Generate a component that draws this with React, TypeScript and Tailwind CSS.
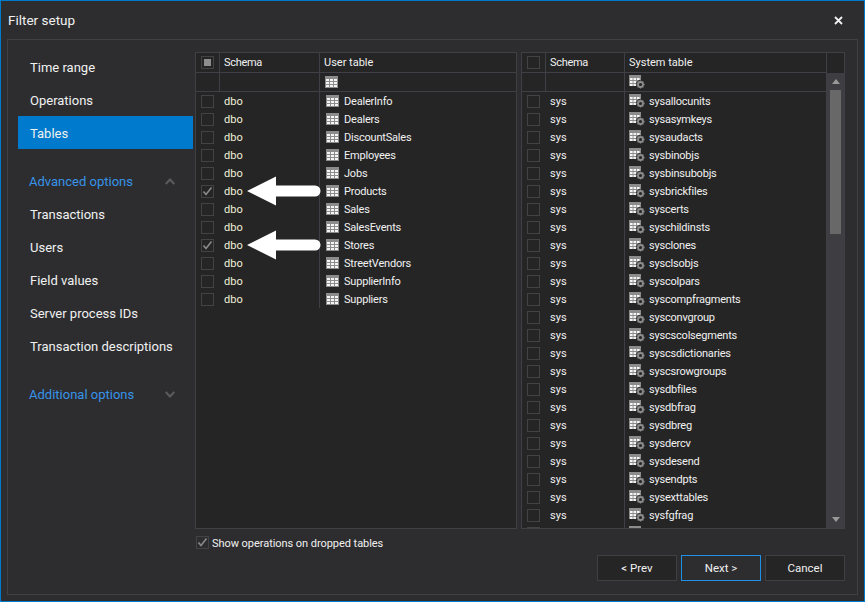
import { ReactNode } from "react";

const font = { fontFamily: 'Roboto, "Open Sans", sans-serif' };

const userTables: { name: string; checked?: boolean }[] = [
  { name: "DealerInfo" },
  { name: "Dealers" },
  { name: "DiscountSales" },
  { name: "Employees" },
  { name: "Jobs" },
  { name: "Products", checked: true },
  { name: "Sales" },
  { name: "SalesEvents" },
  { name: "Stores", checked: true },
  { name: "StreetVendors" },
  { name: "SupplierInfo" },
  { name: "Suppliers" },
];

const systemTables = [
  "sysallocunits",
  "sysasymkeys",
  "sysaudacts",
  "sysbinobjs",
  "sysbinsubobjs",
  "sysbrickfiles",
  "syscerts",
  "syschildinsts",
  "sysclones",
  "sysclsobjs",
  "syscolpars",
  "syscompfragments",
  "sysconvgroup",
  "syscscolsegments",
  "syscsdictionaries",
  "syscsrowgroups",
  "sysdbfiles",
  "sysdbfrag",
  "sysdbreg",
  "sysdercv",
  "sysdesend",
  "sysendpts",
  "sysexttables",
  "sysfgfrag",
];

const CheckBox = ({ checked, mixed }: { checked?: boolean; mixed?: boolean }) => (
  <span className="flex h-[13px] w-[13px] shrink-0 items-center justify-center border border-[#434346]">
    {checked && (
      <svg width="11" height="11" viewBox="0 0 11 11" fill="none">
        <path d="M1.5 5.5 L4 8.5 L9.5 1.5" stroke="#8a8a8a" strokeWidth="1.6" />
      </svg>
    )}
    {mixed && <span className="h-[7px] w-[7px] bg-[#8e8e8e]" />}
  </span>
);

const TableIcon = () => (
  <svg width="13" height="12" viewBox="0 0 13 12" className="shrink-0">
    <rect width="13" height="12" fill="#8c8c8c" />
    {[3, 6, 9].map((y) =>
      [1, 5, 9].map((x) => <rect key={`${x}-${y}`} x={x} y={y} width="3" height="2" fill="#f4f4f4" />)
    )}
  </svg>
);

const SystemTableIcon = () => (
  <svg width="16" height="14" viewBox="0 0 16 14" className="shrink-0">
    <rect width="12" height="11" fill="#8c8c8c" />
    {[3, 6, 9].map((y) =>
      [1, 4.5, 8].map((x) => <rect key={`${x}-${y}`} x={x} y={y} width="2.6" height="2" fill="#f4f4f4" />)
    )}
    <circle cx="11.5" cy="9.5" r="4.6" fill="#252526" />
    <circle cx="11.5" cy="9.5" r="2.5" fill="none" stroke="#8c8c8c" strokeWidth="1.8" />
    <path
      d="M11.5 5.4 V6.6 M11.5 12.4 V13.6 M7.4 9.5 H8.6 M14.4 9.5 H15.6 M8.6 6.6 L9.4 7.4 M13.6 11.6 L14.4 12.4 M14.4 6.6 L13.6 7.4 M9.4 11.6 L8.6 12.4"
      stroke="#8c8c8c"
      strokeWidth="1.3"
    />
  </svg>
);

const Chevron = ({ up }: { up?: boolean }) => (
  <svg width="10" height="7" viewBox="0 0 10 7" fill="none">
    <path d={up ? "M0.7 6 L5 1.5 L9.3 6" : "M0.7 1 L5 5.5 L9.3 1"} stroke="#5c5c60" strokeWidth="2" />
  </svg>
);

const Arrow = ({ className }: { className: string }) => (
  <svg width="74" height="30" viewBox="0 0 74 30" className={`absolute ${className}`}>
    <path d="M0 15 L29 0.5 V9.5 H68 A5.5 5.5 0 0 1 68 20.5 H29 V29.5 Z" fill="#fff" />
  </svg>
);

const NavItem = ({ children, active, low }: { children: ReactNode; active?: boolean; low?: boolean }) => (
  <div
    className={`flex h-[33px] items-center pl-[12px] text-[13px] text-[#f1f1f1] ${low ? "pt-[2px]" : ""} ${
      active ? "bg-[#007acc]" : ""
    }`}
  >
    {children}
  </div>
);

const NavGroup = ({ label, up, className }: { label: string; up?: boolean; className: string }) => (
  <div className={`flex h-[33px] items-center justify-between pl-[11px] pr-[18px] text-[13px] text-[#3794e8] ${className}`}>
    {label}
    <Chevron up={up} />
  </div>
);

const Button = ({ children, focused }: { children: ReactNode; focused?: boolean }) => (
  <button
    type="button"
    className={`flex h-[26px] w-[80px] items-center justify-center border pt-[2px] text-[11.5px] text-[#f1f1f1] ${
      focused ? "border-[#1e90e6] bg-[#2d2d30]" : "border-[#3f3f46] bg-[#252526]"
    }`}
  >
    {children}
  </button>
);

const App = () => {
  return (
    <div
      style={font}
      className="flex h-[602px] w-[865px] flex-col overflow-hidden border border-[#007acc] bg-[#2d2d30]"
    >
      <div className="flex h-[38px] shrink-0 items-center justify-between pl-[7px] pr-[21px] text-[13.5px] text-[#f1f1f1]">
        <span>Filter setup</span>
        <svg width="9" height="9" viewBox="0 0 9 9" fill="none">
          <path d="M1 1 L8 8 M8 1 L1 8" stroke="#f1f1f1" strokeWidth="1.8" />
        </svg>
      </div>

      <div className="mx-[6px] mb-[6px] flex min-h-0 flex-1 border border-[#3f3f46]">
        <div className="w-[185px] shrink-0 pl-[10px] pt-[10px]">
          <NavItem low>Time range</NavItem>
          <NavItem low>Operations</NavItem>
          <NavItem low active>
            Tables
          </NavItem>
          <NavGroup label="Advanced options" up className="mt-[16px]" />
          <NavItem>Transactions</NavItem>
          <NavItem>Users</NavItem>
          <NavItem>Field values</NavItem>
          <NavItem>Server process IDs</NavItem>
          <NavItem>Transaction descriptions</NavItem>
          <NavGroup label="Additional options" className="mt-[15px]" />
        </div>

        <div className="ml-[2px] flex min-w-0 flex-1 flex-col pt-[12px]">
          <div className="flex h-[477px] gap-[4px] text-[11px] text-[#f1f1f1]">
            {/* user tables */}
            <div className="relative flex w-[322px] flex-col border border-[#3f3f46] bg-[#252526]">
              <div className="flex h-[20px] shrink-0 border-b border-[#3f3f46]">
                <div className="flex w-[24px] items-center border-r border-[#3f3f46] pl-[5px]">
                  <CheckBox mixed />
                </div>
                <div className="flex w-[100px] items-center border-r border-[#3f3f46] pl-[4px] pt-[2px] tracking-[-0.3px]">
                  Schema
                </div>
                <div className="flex items-center pl-[4px] pt-[2px]">User table</div>
              </div>
              <div className="flex h-[19px] shrink-0 border-b border-[#3f3f46]">
                <div className="w-[24px] border-r border-[#3f3f46]" />
                <div className="w-[100px] border-r border-[#3f3f46]" />
                <div className="flex items-center pl-[5px]">
                  <TableIcon />
                </div>
              </div>
              {userTables.map((t) => (
                <div key={t.name} className="flex h-[18px] shrink-0">
                  <div className="flex w-[24px] items-center pl-[5px]">
                    <CheckBox checked={t.checked} />
                  </div>
                  <div className="flex w-[99px] items-center pl-[4px] pt-[2px] text-[#f0f0d8]">dbo</div>
                  <div className="flex items-center gap-[5px] border-l border-[#3f3f46] pl-[6px]">
                    <TableIcon />
                    <span className="pt-[2px] tracking-[-0.2px]">{t.name}</span>
                  </div>
                </div>
              ))}
              <Arrow className="left-[51px] top-[123px]" />
              <Arrow className="left-[51px] top-[177px]" />
            </div>

            {/* system tables */}
            <div className="flex w-[324px] border border-[#3f3f46] bg-[#252526]">
              <div className="flex min-w-0 flex-1 flex-col overflow-hidden">
                <div className="flex h-[20px] shrink-0 border-b border-[#3f3f46]">
                  <div className="flex w-[24px] items-center border-r border-[#3f3f46] pl-[5px]">
                    <CheckBox />
                  </div>
                  <div className="flex w-[79px] items-center border-r border-[#3f3f46] pl-[4px] pt-[2px] tracking-[-0.3px]">
                    Schema
                  </div>
                  <div className="flex items-center pl-[4px] pt-[2px]">System table</div>
                </div>
                <div className="flex h-[19px] shrink-0 border-b border-[#3f3f46]">
                  <div className="w-[24px] border-r border-[#3f3f46]" />
                  <div className="w-[79px] border-r border-[#3f3f46]" />
                  <div className="flex items-center pl-[4px]">
                    <SystemTableIcon />
                  </div>
                </div>
                {systemTables.map((name) => (
                  <div key={name} className="flex h-[18px] shrink-0">
                    <div className="flex w-[24px] items-center pl-[5px]">
                      <CheckBox />
                    </div>
                    <div className="flex w-[78px] items-center pl-[4px] pt-[2px]">sys</div>
                    <div className="flex flex-1 items-center gap-[4px] border-l border-[#3f3f46] pl-[4px]">
                      <SystemTableIcon />
                      <span className="pt-[2px] tracking-[-0.2px]">{name}</span>
                    </div>
                  </div>
                ))}
                {/* next row, cut off by the bottom of the grid */}
                <div className="flex h-[18px] shrink-0">
                  <div className="flex w-[24px] items-center pl-[5px]">
                    <CheckBox />
                  </div>
                  <div className="w-[78px]" />
                  <div className="flex flex-1 items-center border-l border-[#3f3f46] pl-[4px]">
                    <SystemTableIcon />
                  </div>
                </div>
              </div>
              <div className="flex w-[18px] shrink-0 flex-col border-l border-[#3f3f46] bg-[#3e3e42]">
                <div className="h-[20px] shrink-0 bg-[#252526]" />
                <div className="flex h-[17px] shrink-0 items-center justify-center">
                  <span className="h-0 w-0 border-x-[4px] border-b-[5px] border-x-transparent border-b-[#999999]" />
                </div>
                <div className="mx-[3px] h-[144px] shrink-0 bg-[#686868]" />
                <div className="flex-1" />
                <div className="flex h-[17px] shrink-0 items-center justify-center">
                  <span className="h-0 w-0 border-x-[4px] border-t-[5px] border-x-transparent border-t-[#999999]" />
                </div>
              </div>
            </div>
          </div>

          <div className="ml-[1px] mt-[7px] flex h-[13px] items-center gap-[3px] text-[11px] text-[#f1f1f1]">
            <CheckBox checked />
            <span className="pt-[3px] tracking-[-0.05px]">Show operations on dropped tables</span>
          </div>

          <div className="ml-[402px] mt-[6px] flex gap-[4px]">
            <Button>&lt; Prev</Button>
            <Button focused>Next &gt;</Button>
            <Button>Cancel</Button>
          </div>
        </div>
      </div>
    </div>
  );
};

export default App;
